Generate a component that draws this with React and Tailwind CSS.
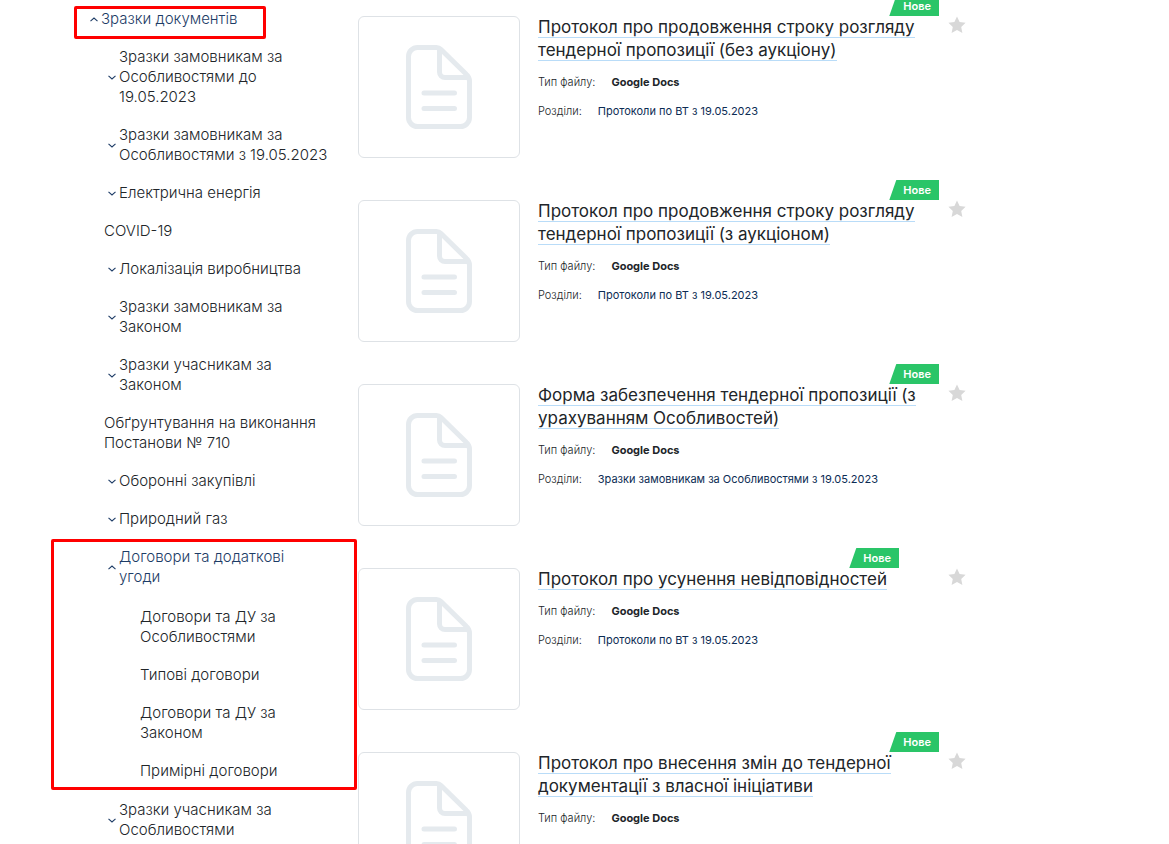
import clsx from "clsx";

const sections = [
  { label: "Зразки замовникам за\nОсобливостями до\n19.05.2023", arrow: true },
  { label: "Зразки замовникам за\nОсобливостями з 19.05.2023", arrow: true },
  { label: "Електрична енергія", arrow: true },
  { label: "COVID-19" },
  { label: "Локалізація виробництва", arrow: true },
  { label: "Зразки замовникам за\nЗаконом", arrow: true },
  { label: "Зразки учасникам за\nЗаконом", arrow: true },
  { label: "Обґрунтування на виконання\nПостанови № 710" },
  { label: "Оборонні закупівлі", arrow: true },
  { label: "Природний газ", arrow: true },
  {
    label: "Договори та додаткові\nугоди",
    arrow: true,
    children: [
      "Договори та ДУ за\nОсобливостями",
      "Типові договори",
      "Договори та ДУ за\nЗаконом",
      "Примірні договори",
    ],
  },
  { label: "Зразки учасникам за\nОсобливостями", arrow: true },
];

const documents = [
  {
    title: "Протокол про продовження строку розгляду\nтендерної пропозиції (без аукціону)",
    section: "Протоколи по ВТ з 19.05.2023",
  },
  {
    title: "Протокол про продовження строку розгляду\nтендерної пропозиції (з аукціоном)",
    section: "Протоколи по ВТ з 19.05.2023",
  },
  {
    title: "Форма забезпечення тендерної пропозиції (з\nурахуванням Особливостей)",
    section: "Зразки замовникам за Особливостями з 19.05.2023",
  },
  {
    title: "Протокол про усунення невідповідностей",
    section: "Протоколи по ВТ з 19.05.2023",
    short: true,
  },
  {
    title: "Протокол про внесення змін до тендерної\nдокументації з власної ініціативи",
  },
];

function Chevron({ open }) {
  return (
    <svg
      viewBox="0 0 8 5"
      className={clsx("h-[5px] w-2 shrink-0 text-[#1d3c66]", open && "rotate-180")}
      fill="none"
      stroke="currentColor"
      strokeWidth="1.1"
    >
      <path d="M.5.8 4 3.9 7.5.8" />
    </svg>
  );
}

function FileIcon() {
  return (
    <svg
      viewBox="0 0 66 84"
      className="h-[84px] w-[66px] text-[#e5eaee]"
      fill="none"
      stroke="currentColor"
      strokeWidth="5"
    >
      <path d="M11.5 2.5H30a7 7 0 0 1 5 2L60.5 29.5a9 9 0 0 1 3 6.500V72.500a9 9 0 0 1-9 9h-43a9 9 0 0 1-9-9v-61a9 9 0 0 1 9-9Z" />
      <path d="M33.5 3.500V27a5.500 5.500 0 0 0 5.500 5.500H62" />
      <path d="M18 48h30.500M18 63.500h30.500" strokeLinecap="round" />
    </svg>
  );
}

function Sidebar() {
  return (
    <nav className="w-[338px] shrink-0 pt-1.5 text-[15px] leading-5 font-light text-[#212529]">
      <div className="ml-[74px] w-48 rounded-xs border-3 border-[#ff0000] pb-[7px]">
        <a href="#" className="flex items-center gap-[3px] pl-[13px] text-[#1d3c66]">
          <Chevron open />
          Зразки документів
        </a>
      </div>
      <ul className="mt-2 flex flex-col gap-[18px] pl-[104px]">
        {sections.map((s) => (
          <li key={s.label} className="relative">
            <a
              href="#"
              className={clsx(
                "flex items-center gap-[3px] whitespace-pre",
                s.arrow && "pl-1",
                s.children && "text-[#1d3c66]"
              )}
            >
              {s.arrow && <Chevron open={!!s.children} />}
              {s.label}
            </a>
            {s.children && (
              <>
                <ul className="mt-5 mb-px flex flex-col gap-[18px] pl-9">
                  {s.children.map((c) => (
                    <li key={c}>
                      <a href="#" className="block whitespace-pre">{c}</a>
                    </li>
                  ))}
                </ul>
                <div className="pointer-events-none absolute -top-2 -right-[19px] -bottom-2 -left-[53px] z-10 rounded-xs border-3 border-[#ff0000]" />
              </>
            )}
          </li>
        ))}
      </ul>
    </nav>
  );
}

function DocumentCard({ doc }) {
  return (
    <article className="flex h-[142px] items-start">
      <div className="flex h-[142px] w-[162px] shrink-0 items-center justify-center rounded-md border border-[#dee2e6]">
        <FileIcon />
      </div>
      <div className="ml-[18px] w-[401px] shrink-0">
        <h3
          className={clsx(
            "relative text-[17px] leading-[23px] text-[#212529]",
            doc.short && "w-[361px]"
          )}
        >
          <a href="#" className="border-b border-[#b9dcf8] whitespace-pre">{doc.title}</a>
          <span className="absolute right-0 bottom-full h-5 bg-[#2ac568] pr-2 pl-3.5 text-[11px] leading-5 font-semibold text-white [clip-path:polygon(7px_0,100%_0,100%_100%,0_100%)]">
            Нове
          </span>
        </h3>
        <dl className="mt-3 flex flex-col gap-[13px] text-[11px] leading-4">
          <div className="flex gap-4">
            <dt className="font-light text-[#212529]">Тип файлу:</dt>
            <dd className="font-bold text-[#212529]">Google Docs</dd>
          </div>
          {doc.section && (
            <div className="flex gap-4">
              <dt className="font-light text-[#212529]">Розділи:</dt>
              <dd>
                <a href="#" className="whitespace-nowrap text-[#0c2c54]">{doc.section}</a>
              </dd>
            </div>
          )}
        </dl>
      </div>
      <button type="button" aria-label="Додати в обране" className="ml-[9px] text-[#d8d8d8]">
        <svg viewBox="0 0 18 18" className="size-[18px]" fill="currentColor">
          <path d="m9 .5 2.600 5.600 6 .7-4.400 4.200 1.200 6L9 14l-5.400 3 1.200-6L.4 6.800l6-.7Z" />
        </svg>
      </button>
    </article>
  );
}

export default function App() {
  return (
    <div className="flex h-screen overflow-hidden bg-white font-['Inter','Noto_Sans',sans-serif]">
      <Sidebar />
      <main className="flex flex-1 flex-col gap-[42px] pt-4 pl-5">
        {documents.map((doc) => (
          <DocumentCard key={doc.title} doc={doc} />
        ))}
      </main>
    </div>
  );
}
